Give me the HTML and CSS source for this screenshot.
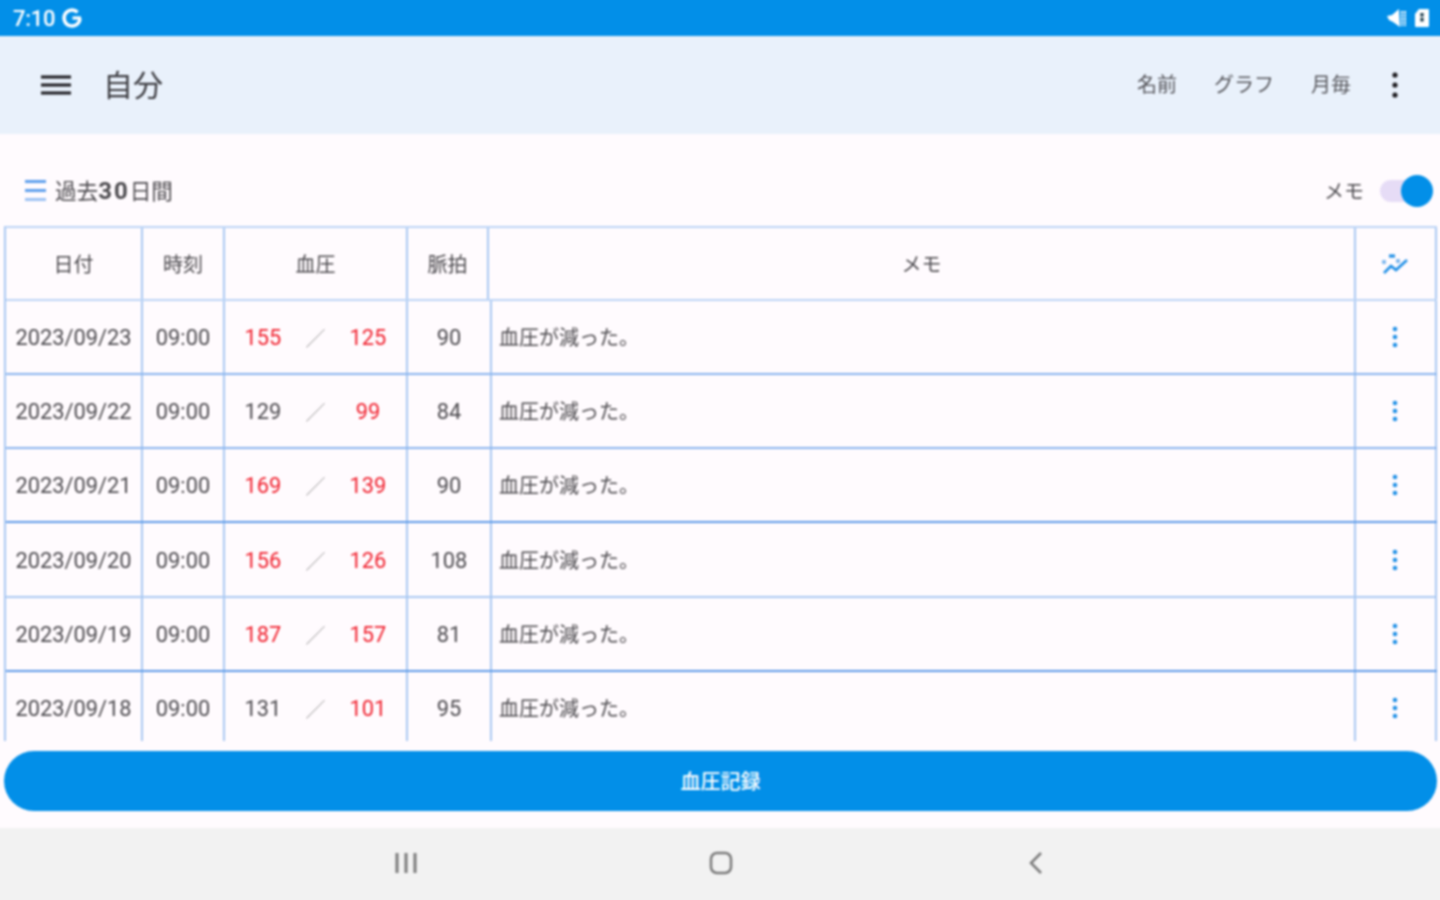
FILE: index.html
```html
<!DOCTYPE html>
<html lang="ja">
<head>
<meta charset="utf-8">
<title>血圧記録</title>
<link rel="stylesheet" href="styles.css">
</head>
<body>
<div class="screen">
  <header class="status">
    <div class="status-left">
      <span class="time">7:10</span>
      <svg class="g-logo" viewBox="0 0 24 24" width="24" height="24"><path d="M20 12.5a8 8 0 1 1-2.4-6.2" fill="none" stroke="#fff" stroke-width="3.4"/><path d="M12.5 12h8.5" stroke="#fff" stroke-width="3.2"/></svg>
    </div>
    <div class="status-right">
      <svg viewBox="0 0 20 20" width="20" height="20"><path d="M0 8l5-1 7-6 1 18-7-5-4-2z" fill="#fff"/><path d="M15 3v15M18 3v15" stroke="#fff" stroke-width="2" stroke-dasharray="2.4 1"/></svg>
      <svg viewBox="0 0 16 20" width="16" height="20"><path d="M1 6l4-5h9a1 1 0 0 1 1 1v16a1 1 0 0 1-1 1H2a1 1 0 0 1-1-1z" fill="#fff"/><path d="M8 5v9" stroke="#1a3a4a" stroke-width="3.2" stroke-dasharray="3.6 1.2"/></svg>
    </div>
  </header>

  <div class="appbar">
    <svg class="menu-icon" viewBox="0 0 30 20" width="30" height="20"><path d="M0 2h30M0 10h30M0 18h30" stroke="#1c1b1f" stroke-width="3"/></svg>
    <h1 class="title">自分</h1>
    <nav class="actions">
      <span>名前</span>
      <span>グラフ</span>
      <span>月毎</span>
      <svg class="kebab-dark" viewBox="0 0 6 26" width="6" height="26"><circle cx="3" cy="3" r="2.6"/><circle cx="3" cy="13" r="2.6"/><circle cx="3" cy="23" r="2.6"/></svg>
    </nav>
  </div>

  <main class="content">
    <div class="subheader">
      <div class="period">
        <svg viewBox="0 0 21 21" width="21" height="21"><path d="M0 1.5h21M0 10.5h21" stroke="#5f9fec" stroke-width="3"/><path d="M0 19.5h21" stroke="#9dc2f3" stroke-width="3"/></svg>
        <span class="period-label">過去<b class="period-days">30</b>日間</span>
      </div>
      <div class="memo-switch">
        <span>メモ</span>
        <div class="toggle"><div class="thumb"></div></div>
      </div>
    </div>

    <div class="table">
      <div class="row head">
        <div class="cell">日付</div>
        <div class="cell">時刻</div>
        <div class="cell">血圧</div>
        <div class="cell">脈拍</div>
        <div class="cell">メモ</div>
        <div class="cell action">
          <svg viewBox="0 0 28 22" width="28" height="22" fill="none" stroke="#1f8fe6" stroke-width="2.6"><path d="M3 20l7-7 5 4 11-10"/><circle cx="3" cy="9" r="2.2" fill="#7db8ee" stroke="none"/><circle cx="17" cy="8" r="2.2" fill="#7db8ee" stroke="none"/><path d="M8 3h6" stroke-width="3.2"/></svg>
        </div>
      </div>

      <div class="row strong">
        <div class="cell">2023/09/23</div><div class="cell">09:00</div>
        <div class="cell bp"><span class="high">155</span><span class="sep">／</span><span class="high">125</span></div>
        <div class="cell">90</div><div class="cell memo">血圧が減った。</div>
        <div class="cell action"><svg class="kebab" viewBox="0 0 6 22" width="6" height="22"><circle cx="3" cy="3" r="2.3"/><circle cx="3" cy="11" r="2.3"/><circle cx="3" cy="19" r="2.3"/></svg></div>
      </div>
      <div class="row strong">
        <div class="cell">2023/09/22</div><div class="cell">09:00</div>
        <div class="cell bp"><span>129</span><span class="sep">／</span><span class="high">99</span></div>
        <div class="cell">84</div><div class="cell memo">血圧が減った。</div>
        <div class="cell action"><svg class="kebab" viewBox="0 0 6 22" width="6" height="22"><circle cx="3" cy="3" r="2.3"/><circle cx="3" cy="11" r="2.3"/><circle cx="3" cy="19" r="2.3"/></svg></div>
      </div>
      <div class="row dark">
        <div class="cell">2023/09/21</div><div class="cell">09:00</div>
        <div class="cell bp"><span class="high">169</span><span class="sep">／</span><span class="high">139</span></div>
        <div class="cell">90</div><div class="cell memo">血圧が減った。</div>
        <div class="cell action"><svg class="kebab" viewBox="0 0 6 22" width="6" height="22"><circle cx="3" cy="3" r="2.3"/><circle cx="3" cy="11" r="2.3"/><circle cx="3" cy="19" r="2.3"/></svg></div>
      </div>
      <div class="row">
        <div class="cell">2023/09/20</div><div class="cell">09:00</div>
        <div class="cell bp"><span class="high">156</span><span class="sep">／</span><span class="high">126</span></div>
        <div class="cell">108</div><div class="cell memo">血圧が減った。</div>
        <div class="cell action"><svg class="kebab" viewBox="0 0 6 22" width="6" height="22"><circle cx="3" cy="3" r="2.3"/><circle cx="3" cy="11" r="2.3"/><circle cx="3" cy="19" r="2.3"/></svg></div>
      </div>
      <div class="row dark">
        <div class="cell">2023/09/19</div><div class="cell">09:00</div>
        <div class="cell bp"><span class="high">187</span><span class="sep">／</span><span class="high">157</span></div>
        <div class="cell">81</div><div class="cell memo">血圧が減った。</div>
        <div class="cell action"><svg class="kebab" viewBox="0 0 6 22" width="6" height="22"><circle cx="3" cy="3" r="2.3"/><circle cx="3" cy="11" r="2.3"/><circle cx="3" cy="19" r="2.3"/></svg></div>
      </div>
      <div class="row">
        <div class="cell">2023/09/18</div><div class="cell">09:00</div>
        <div class="cell bp"><span>131</span><span class="sep">／</span><span class="high">101</span></div>
        <div class="cell">95</div><div class="cell memo">血圧が減った。</div>
        <div class="cell action"><svg class="kebab" viewBox="0 0 6 22" width="6" height="22"><circle cx="3" cy="3" r="2.3"/><circle cx="3" cy="11" r="2.3"/><circle cx="3" cy="19" r="2.3"/></svg></div>
      </div>
    </div>

    <button class="record">血圧記録</button>
  </main>

  <footer class="navbar">
    <div class="nav-item"><svg viewBox="0 0 24 22" width="24" height="22"><path d="M3 1v20M12 1v20M21 1v20" stroke="#7b7b7b" stroke-width="3"/></svg></div>
    <div class="nav-item"><svg viewBox="0 0 24 26" width="24" height="26"><rect x="2" y="3" width="20" height="20" rx="6" fill="none" stroke="#7b7b7b" stroke-width="2.5"/></svg></div>
    <div class="nav-item"><svg viewBox="0 0 14 24" width="14" height="24"><path d="M12 2L2 12l10 10" fill="none" stroke="#7b7b7b" stroke-width="2.5"/></svg></div>
  </footer>
</div>
</body>
</html>
```
FILE: styles.css
```css
* { box-sizing: border-box; }
html, body { margin: 0; padding: 0; overflow: hidden; height: 100%; }
body {
  font-family: Roboto, "Noto Sans CJK JP", sans-serif;
  background: #fffbfe;
  color: #4d4b4f;
}
.screen {
  width: 1440px;
  height: 900px;
  display: flex;
  flex-direction: column;
  filter: blur(0.8px);
}
.status {
  height: 36px;
  flex: none;
  background: #028fe8;
  color: #fff;
  display: flex;
  align-items: center;
  justify-content: space-between;
  padding: 0 10px 0 13px;
  box-shadow: 0 1px 0 #cfe6f8, 0 -4px 0 4px #028fe8;
}
.status-left { display: flex; align-items: center; gap: 5px; }
.time { font-size: 22px; font-weight: 500; letter-spacing: -0.3px; }
.g-logo { display: block; }
.status-right { display: flex; align-items: center; gap: 7px; }
.appbar {
  height: 98px;
  flex: none;
  background: #e9f1fb;
  display: flex;
  align-items: center;
  padding: 0 42px 0 41px;
  box-shadow: -4px 0 0 #e9f1fb, 4px 0 0 #e9f1fb;
}
.menu-icon { flex: none; }
.title {
  margin: 0 0 4px 34px;
  font-size: 30px;
  font-weight: 400;
  color: #3d3d42;
  transform: translateX(-2px);
}
.actions {
  margin-left: auto;
  display: flex;
  align-items: center;
  gap: 37px;
  font-size: 20px;
  color: #55555a;
  line-height: 26px;
}
.kebab-dark { fill: #1c1b1f; margin-left: 4px; }
.content {
  flex: 1;
  min-height: 0;
  display: flex;
  flex-direction: column;
}
.subheader {
  height: 92px;
  flex: none;
  display: flex;
  align-items: center;
  justify-content: space-between;
  padding: 21px 16px 0 25px;
  font-size: 20px;
}
.period { display: flex; align-items: center; gap: 9px; }
.period svg { display: block; }
.period-label { font-size: 21.6px; line-height: 26px; margin-top: 2px; }
.period-days { font-size: 24px; font-weight: 700; letter-spacing: 2px; }
.memo-switch { display: flex; align-items: center; gap: 16px; }
.toggle {
  position: relative;
  width: 44px;
  height: 22px;
  border-radius: 11px;
  background: #e6dcf6;
}
.thumb {
  position: absolute;
  top: -5px;
  right: -9px;
  width: 32px;
  height: 32px;
  border-radius: 50%;
  background: #028fe8;
}
.table {
  flex: 1;
  min-height: 0;
  margin: 0 3px 0 4px;
  overflow: hidden;
  border-top: 2px solid #bcd4f5;
  border-left: 2px solid #a9c8f2;
  font-size: 21.8px;
  line-height: 1;
}
.row {
  display: grid;
  grid-template-columns: 137px 82px 183px 84px 864px 81px;
  height: 74.17px;
  border-bottom: 2px solid #a9c8f2;
}
.row.strong { border-bottom-color: #8ab4ee; }
.row.dark { border-bottom-color: #5e9ae8; }
.row.head {
  grid-template-columns: 137px 82px 183px 81px 867px 81px;
  height: 73px;
  font-size: 20px;
  border-bottom-color: #bcd4f5;
}
.cell {
  display: flex;
  align-items: center;
  justify-content: center;
  padding-top: 2px;
  border-right: 2px solid #a9c8f2;
  white-space: nowrap;
}
.action { padding: 0 2px 0 0; }
.memo {
  justify-content: flex-start;
  padding-left: 7px;
  font-size: 20px;
}
.bp {
  display: grid;
  grid-template-columns: repeat(3, 52.5px);
  justify-content: center;
  justify-items: center;
  align-items: center;
}
.high { color: #f01f2c; }
.sep { color: #a8a8a8; font-size: 20px; font-family: "Noto Sans CJK JP", sans-serif; }
.kebab { fill: #1f8fe6; display: block; }
.record {
  flex: none;
  height: 60px;
  margin: 10px 3px 17px 4px;
  padding: 0 0 2px;
  border: 0;
  border-radius: 30px;
  background: #028fe8;
  color: #fff;
  font: inherit;
  font-size: 20px;
  font-weight: 500;
}
.navbar {
  height: 72px;
  flex: none;
  background: #f2f2f2;
  display: grid;
  grid-template-columns: repeat(3, 315px);
  justify-content: center;
  padding: 0 0 2px 2px;
  box-shadow: 0 4px 0 4px #f2f2f2;
}
.nav-item {
  display: flex;
  align-items: center;
  justify-content: center;
}
```
